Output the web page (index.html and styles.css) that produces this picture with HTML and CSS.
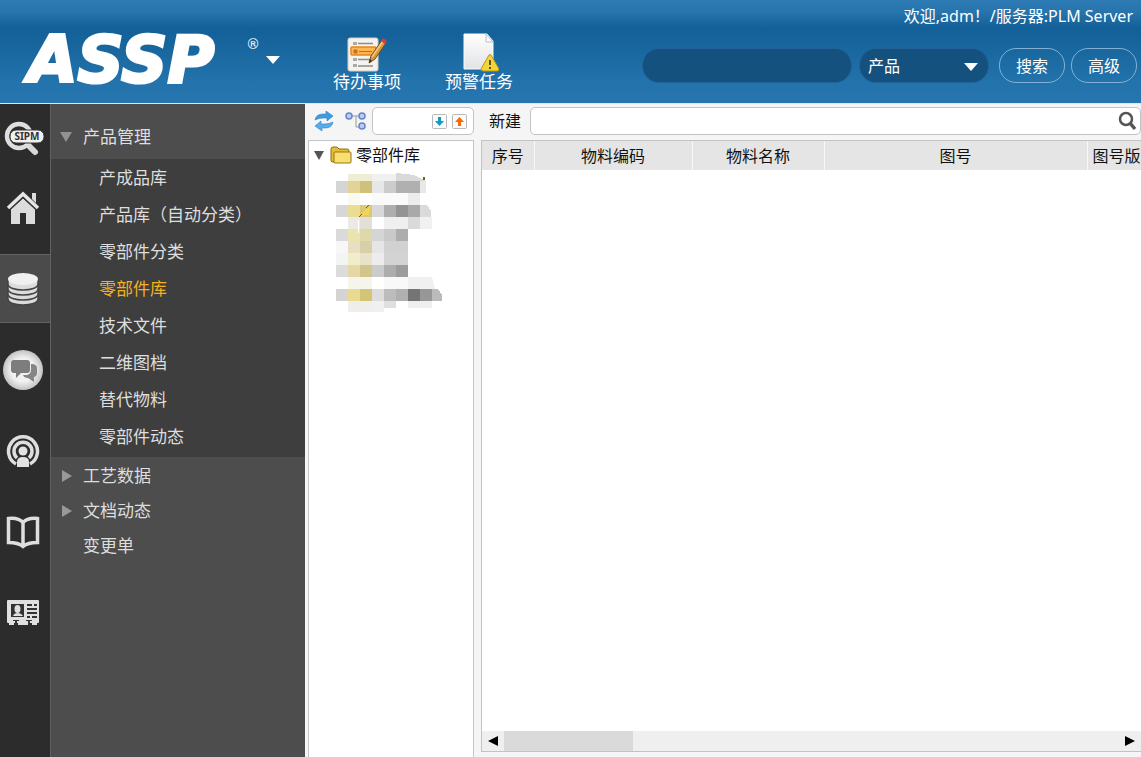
FILE: index.html
```html
<!DOCTYPE html>
<html lang="zh-CN">
<head>
    <meta charset="UTF-8">
    <title>ASSP</title>
    <link rel="stylesheet" href="styles.css">
</head>
<body>
    <!-- 顶部 -->
    <header class="m-header">
        <div class="logo">ASSP<sup>®</sup></div>
        <button class="logo-more" type="button" aria-label="ASSP"><i class="tri-down"></i></button>

        <nav class="shortcuts">
            <a href="#">
                <svg width="40" height="36" viewBox="0 0 40 36">
                    <rect x="1" y="2" width="30" height="33" rx="2" fill="#f5f3ee" stroke="#d3cfc6"/>
                    <rect x="6" y="6" width="4" height="3" fill="#aaa"/><path d="M11 7.500h15M11 23.500h14M11 30h15" stroke="#8d8d8d" stroke-width="1.500"/>
                    <rect x="6" y="22" width="4" height="3" fill="#aaa"/><rect x="6" y="28" width="4" height="3" fill="#aaa"/>
                    <rect x="4" y="11" width="25" height="8" rx="1" fill="#ffb551" stroke="#e8851c" stroke-width="1.500"/>
                    <path d="M7 14h3v3H7zM12 15.500h13" fill="#c77418" stroke="#b5752c"/>
                    <path d="M22 27l2-7L35 4l4 3-11 16z" fill="#d99a3e" stroke="#75471d"/>
                    <path d="M25 21L36 5" stroke="#f7cc7d" stroke-width="1.500"/>
                    <path d="M34 5l2-3 4 3-2 3z" fill="#df3b32"/><path d="M22 27l1-4 2 2z" fill="#333"/>
                </svg>
                <span>待办事项</span>
            </a>
            <a href="#">
                <svg width="40" height="40" viewBox="0 0 40 40">
                    <defs><linearGradient id="paper" x2="0" y2="1"><stop stop-color="#fff"/><stop offset="1" stop-color="#e2e3e6"/></linearGradient></defs>
                    <path d="M5 2h23l6 7v28H5z" fill="url(#paper)" stroke="#fafafa"/>
                    <path d="M27 2v8h7z" fill="#fff" stroke="#b6c0cb"/>
                    <path d="M30 23q1-1 2 0l8 14q0 2-2 2H24q-2 0-2-2z" fill="#f3d43b" stroke="#bd9614"/>
                    <path d="M30 28h2v5h-2zM30 35h2v2h-2z" fill="#665214"/>
                </svg>
                <span>预警任务</span>
            </a>
        </nav>

        <div class="header-right">
            <p class="welcome">欢迎,adm！/服务器:PLM Server</p>
            <form class="search">
                <input class="search-text" type="text" aria-label="搜索">
                <div class="search-type">
                    <select aria-label="产品"><option>产品</option></select>
                    <i class="tri-down"></i>
                </div>
                <button class="btn" type="button">搜索</button>
                <button class="btn" type="button">高级</button>
            </form>
        </div>
    </header>

    <div class="m-body">
        <!-- 图标栏 -->
        <aside class="m-rail">
            <a class="rail-item" href="#" aria-label="SIPM">
                <svg width="42" height="38" viewBox="0 0 42 38">
                    <path d="M26 25l7 7" stroke="#d8d8d8" stroke-width="6" stroke-linecap="round"/>
                    <circle cx="17" cy="16" r="12" fill="none" stroke="#dedede" stroke-width="4.500"/>
                    <rect x="8" y="10" width="34" height="13" rx="6" fill="#f0f0f0" stroke="#333"/>
                    <text class="sipm" x="25" y="20" text-anchor="middle">SIPM</text>
                </svg>
            </a>
            <nav class="rail-nav">
                <a class="rail-item" href="#" aria-label="首页">
                    <svg width="34" height="36" viewBox="0 0 34 36">
                        <path d="M26 3h4v10l-4-4z" fill="#ddd"/>
                        <path d="M2 18L17 4l15 14" fill="none" stroke="#e6e6e6" stroke-width="3.500"/>
                        <path d="M5 19L17 8l12 11v15h-9V23h-6v11H5z" fill="#dcdcdc"/>
                        <path d="M4 20L17 8l13 12" fill="none" stroke="#333"/>
                    </svg>
                </a>
                <a class="rail-item z-active" href="#" aria-label="产品管理">
                    <svg width="32" height="34" viewBox="0 0 32 34">
                        <g fill="#dcdcdc" stroke="#444" stroke-width="1.500">
                            <path d="M1 22v5c0 8 30 8 30 0v-5z"/>
                            <path d="M1 17v5c0 8 30 8 30 0v-5z"/>
                            <path d="M1 12v5c0 8 30 8 30 0v-5z"/>
                            <path d="M1 7v5c0 8 30 8 30 0V7z"/>
                            <ellipse cx="16" cy="7" rx="15" ry="6" fill="#f0f0f0" stroke="none"/>
                        </g>
                    </svg>
                </a>
                <a class="rail-item" href="#" aria-label="消息">
                    <svg width="42" height="42" viewBox="0 0 42 42">
                        <defs><radialGradient id="ball"><stop offset=".6" stop-color="#f0f0f0"/><stop offset="1" stop-color="#c2c2c2"/></radialGradient></defs>
                        <circle cx="21" cy="21" r="20" fill="url(#ball)"/>
                        <path d="M29 15h2q4 1 4 4v5q0 3-3 4v5l-6-4q-4 0-5-3h4q4-1 4-5z" fill="#858585"/>
                        <path d="M12 11h13q3 0 3 3v7q0 3-3 3h-6l-5 5v-5h-2q-3 0-3-3v-7q0-3 3-3z" fill="#7d7d7d"/>
                    </svg>
                </a>
                <a class="rail-item" href="#" aria-label="动态">
                    <svg width="34" height="34" viewBox="0 0 34 34">
                        <g fill="none" stroke="#dedede" stroke-width="3.500">
                            <path d="M10 30a14.500 14.500 0 1 1 14 0"/>
                            <path d="M11 24a9 9 0 1 1 12 0"/>
                        </g>
                        <circle cx="17" cy="17" r="4.500" fill="#e2e2e2"/>
                        <path d="M11 33v-5q0-5 6-5t6 5v5z" fill="#e2e2e2"/>
                    </svg>
                </a>
                <a class="rail-item" href="#" aria-label="文档">
                    <svg width="34" height="34" viewBox="0 0 34 34">
                        <path d="M2.500 3.500q10-1 14.500 4 4.500-5 14.500-4v24q-10 0-14.500 4-4.500-4-14.500-4zM17 8v22" fill="none" stroke="#dedede" stroke-width="3.500"/>
                    </svg>
                </a>
                <a class="rail-item" href="#" aria-label="名片">
                    <svg width="32" height="26" viewBox="0 0 32 26">
                        <rect width="32" height="23" rx="1" fill="#e0e0e0"/>
                        <path d="M4 4h13v13H4zM20 4h5v2h-5zM27 4h3v2h-3zM20 8h10v2H20zM20 12h10v2H20zM20 16h3v2h-3zM25 16h5v2h-5z" fill="#333"/>
                        <ellipse cx="10.500" cy="9" rx="3" ry="4" fill="#e0e0e0"/><path d="M6 16q1-3 4.500-3t5.500 3z" fill="#e0e0e0"/>
                        <path d="M2 23h5v2H2zM11 23h10v2H11zM25 23h5v2h-5z" fill="#e0e0e0"/>
                        <path d="M6 20h6v1H6zM8 20h2v5H8zM19 20h6v1h-6zM21 20h2v5h-2z" fill="#333"/>
                    </svg>
                </a>
            </nav>
        </aside>

        <!-- 菜单 -->
        <nav class="m-menu">
            <a class="menu-title first" href="#"><i class="tri-down"></i>产品管理</a>
            <ul class="submenu">
                <li><a href="#">产成品库</a></li>
                <li><a href="#">产品库（自动分类）</a></li>
                <li><a href="#">零部件分类</a></li>
                <li><a class="z-active" href="#">零部件库</a></li>
                <li><a href="#">技术文件</a></li>
                <li><a href="#">二维图档</a></li>
                <li><a href="#">替代物料</a></li>
                <li><a href="#">零部件动态</a></li>
            </ul>
            <a class="menu-title" href="#"><i class="tri-right"></i>工艺数据</a>
            <a class="menu-title" href="#"><i class="tri-right"></i>文档动态</a>
            <a class="menu-title" href="#">变更单</a>
        </nav>

        <!-- 分类树 -->
        <section class="m-tree">
            <div class="toolbar">
                <button class="icon-btn" type="button" aria-label="刷新">
                    <svg width="20" height="20" viewBox="0 0 20 20">
                        <path d="M1 9q1-6 8-6h3V0l7 5-6 5V7H9Q5 7 1 9z" fill="#3f9be0" stroke="#2b7fc6" stroke-width=".6"/>
                        <path d="M19 11q-1 6-8 6H8v3l-7-5 6-5v3h4q4 0 8-2z" fill="#54aeea" stroke="#2b7fc6" stroke-width=".6"/>
                    </svg>
                </button>
                <button class="icon-btn" type="button" aria-label="展开">
                    <svg width="22" height="20" viewBox="0 0 22 20">
                        <path d="M7 5h9M11 5v11h5" fill="none" stroke="#999"/>
                        <g fill="#bccdf5" stroke="#6884cb" stroke-width="1.500"><circle cx="4" cy="5" r="3"/><circle cx="17" cy="5" r="3"/><circle cx="17" cy="15" r="3"/></g>
                    </svg>
                </button>
                <div class="find-box">
                    <input type="text" aria-label="查找">
                    <button class="icon-btn" type="button" aria-label="向下">
                        <svg width="15" height="15" viewBox="0 0 15 15"><rect x=".5" y=".5" width="14" height="14" rx="1" fill="#fafafa" stroke="#b9b9b9"/><path d="M6 3h3v4h3l-4.500 5L3 7h3z" fill="#129bbd"/></svg>
                    </button>
                    <button class="icon-btn" type="button" aria-label="向上">
                        <svg width="15" height="15" viewBox="0 0 15 15"><rect x=".5" y=".5" width="14" height="14" rx="1" fill="#fafafa" stroke="#b9b9b9"/><path d="M6 12h3V8h3L7.500 3 3 8h3z" fill="#f36b08"/></svg>
                    </button>
                </div>
            </div>
            <div class="tree">
                <a class="tree-root" href="#">
                    <i class="tri-down"></i>
                    <svg width="22" height="18" viewBox="0 0 22 18">
                        <path d="M1 15V3q0-2 2-2h4l2 2h8q2 0 2 2v11H2z" fill="#e6bd36" stroke="#8f6c14"/>
                        <path d="M5 6h15q1 0 1 1v9q0 1-1 1H5q-1 0-1-1V7q0-1 1-1z" fill="#f8df72" stroke="#9b7719"/>
                    </svg>
                    <span>零部件库</span>
                </a>
                <!-- 子节点（打码） -->
                <svg class="masked" width="120" height="144" viewBox="0 0 120 144" shape-rendering="crispEdges" aria-hidden="true">
                    <path d="M24 5h24v7H24z" fill="#f0edd5"/><path d="M48 5h24v7H48z" fill="#f0f0f0"/><path d="M72 4l18 2 12 6H72z" fill="#d9d9d9"/>
                    <path d="M12 12h12v12H12z" fill="#d5d5d5"/><path d="M24 12h12v12H24z" fill="#e4d396"/><path d="M36 12h12v12H36z" fill="#cfc179"/><path d="M48 12h12v12H48z" fill="#e7e7e7"/><path d="M60 12h12v12H60z" fill="#ccc"/><path d="M72 12h24v12H72z" fill="#b0b0b0"/><path d="M96 12h6v12h-6z" fill="#e8e8e8"/>
                    <path d="M24 24h12v12H24z" fill="#fbfaf0"/><path d="M48 24h36v12H48z" fill="#fafafa"/><path d="M84 24h12v12H84z" fill="#ececec"/>
                    <path d="M12 36h12v12H12z" fill="#d7d7d7"/><path d="M24 36h12v12H24z" fill="#eadc90"/><path d="M36 36h12v12H36z" fill="#dac876"/><path d="M48 36h12v12H48z" fill="#d8d8d8"/><path d="M60 36h12v12H60z" fill="#aeaeae"/><path d="M72 36h12v12H72z" fill="#949494"/><path d="M84 36h12v12H84z" fill="#a9a9a9"/><path d="M96 36h7l4 6v6H96z" fill="#dadada"/>
                    <path d="M24 48h12v12H24z" fill="#eceae6"/><path d="M36 48h12v12H36z" fill="#e2dfd5"/><path d="M60 48h24v12H60z" fill="#efefef"/><path d="M84 48h12v12H84z" fill="#dadada"/><path d="M96 48h12v12H96z" fill="#f1f1f1"/>
                    <path d="M12 60h12v12H12z" fill="#dadada"/><path d="M24 60h12v12H24z" fill="#eae4ae"/><path d="M36 60h12v12H36z" fill="#dfd9a9"/><path d="M48 60h12v12H48z" fill="#d5d5d5"/><path d="M60 60h12v12H60z" fill="#c9c9c9"/><path d="M72 60h12v12H72z" fill="#adadad"/>
                    <path d="M12 72h12v12H12z" fill="#f7f7f7"/><path d="M24 72h12v12H24z" fill="#e8dfc3"/><path d="M36 72h12v12H36z" fill="#d7cfa9"/><path d="M48 72h12v12H48z" fill="#e5e5e5"/><path d="M60 72h24v12H60z" fill="#d1d1d1"/>
                    <path d="M12 84h12v12H12z" fill="#f3f5f4"/><path d="M24 84h12v12H24z" fill="#f0edc9"/><path d="M36 84h12v12H36z" fill="#e8e3c8"/><path d="M48 84h12v12H48z" fill="#ececec"/><path d="M60 84h24v12H60z" fill="#d3d3d3"/>
                    <path d="M12 96h12v12H12z" fill="#dcdcdc"/><path d="M24 96h12v12H24z" fill="#e5d8a6"/><path d="M36 96h12v12H36z" fill="#d0c68c"/><path d="M48 96h12v12H48z" fill="#cbcbcb"/><path d="M60 96h12v12H60z" fill="#adadad"/><path d="M72 96h12v12H72z" fill="#9c9c9c"/>
                    <path d="M24 108h24v12H24z" fill="#f6f5eb"/><path d="M60 108h24v12H60z" fill="#f8f8f8"/><path d="M84 108h24l3 12H84z" fill="#f0f0f0"/>
                    <path d="M12 120h12v12H12z" fill="#d4d4d4"/><path d="M24 120h12v12H24z" fill="#e8da90"/><path d="M36 120h12v12H36z" fill="#d3c478"/><path d="M48 120h12v12H48z" fill="#ddd"/><path d="M60 120h12v12H60z" fill="#bcbcbc"/><path d="M72 120h12v12H72z" fill="#b0b0b0"/><path d="M84 120h12v12H84z" fill="#747474"/><path d="M96 120h12v12H96z" fill="#979797"/><path d="M108 120h6l4 6v6h-10z" fill="#bbb"/>
                    <path d="M24 132h24v11H24z" fill="#efeeea"/><path d="M48 132h12v11H48z" fill="#f0f0f0"/><path d="M60 132h12v7H60z" fill="#dfdfdf"/><path d="M84 132h24v7H84z" fill="#eee"/>
                    <path d="M35 47l8-7 3-3-1 9z" fill="#f4d552"/><path d="M35 48l3-3M42 39l3-3M99 8h1v2h-1z" stroke="#75601b"/><path d="M34 51h1v13h-1z" fill="#fff"/>
                </svg>
            </div>
        </section>

        <!-- 列表 -->
        <main class="m-main">
            <div class="toolbar">
                <button class="new-btn" type="button">新建</button>
                <div class="filter-box">
                    <input type="text" aria-label="过滤">
                    <button class="icon-btn" type="button" aria-label="查询">
                        <svg width="20" height="20" viewBox="0 0 20 20"><circle cx="9" cy="8" r="6" fill="none" stroke="#555" stroke-width="2.500"/><path d="M13 12l5 6" stroke="#555" stroke-width="3.500"/></svg>
                    </button>
                </div>
            </div>
            <div class="grid">
                <div class="grid-view">
                    <table>
                        <colgroup><col class="col-no"><col class="col-code"><col class="col-name"><col class="col-drawing"><col></colgroup>
                        <thead>
                            <tr><th>序号</th><th>物料编码</th><th>物料名称</th><th>图号</th><th class="left">图号版</th></tr>
                        </thead>
                    </table>
                </div>
                <div class="scrollbar">
                    <button type="button" aria-label="向左"><svg width="10" height="10" viewBox="0 0 10 10"><path d="M0 5l10-5v10z"/></svg></button>
                    <div class="track"><div class="thumb"></div></div>
                    <button type="button" aria-label="向右"><svg width="10" height="10" viewBox="0 0 10 10"><path d="M10 5L0 0v10z"/></svg></button>
                </div>
            </div>
        </main>
    </div>
</body>
</html>
```

FILE: styles.css
```css
* {
    box-sizing: border-box;
}
html, body {
    height: 100%;
    margin: 0;
}
body {
    display: flex;
    flex-direction: column;
    overflow: hidden;
    background: #f5f5f5;
    color: #111;
    font: 16px/20px "Noto Sans", "Noto Sans CJK SC", sans-serif;
}
a {
    color: inherit;
    text-decoration: none;
}
button, input, select {
    margin: 0;
    padding: 0;
    border: 0;
    background: none;
    color: inherit;
    font: inherit;
}
svg {
    display: block;
    flex: none;
}
ul {
    margin: 0;
    padding: 0;
    list-style: none;
}

/* 三角 */
.tri-down, .tri-right {
    display: block;
    flex: none;
    width: 0;
    height: 0;
    border: 6px solid transparent;
}
.tri-down {
    border-width: 8px 7px 0;
    border-top-color: #fff;
}
.tri-right {
    border-width: 6px 0 6px 10px;
    border-left-color: #999;
}

/* header */
.m-header {
    display: flex;
    flex: none;
    height: 104px;
    border-bottom: 1px solid #dfe7ee;
    background: linear-gradient(#2d7bb5 0, #2874ad 12px, #126097 28px, #19679f 50px, #2272ab 80px, #2876af 100%);
    color: #fff;
}
.logo {
    display: flex;
    flex: none;
    align-items: flex-start;
    justify-content: space-between;
    width: 260px;
    padding: 30px 0 0 28px;
    font: italic bold 64px/60px "DejaVu Sans", sans-serif;
    -webkit-text-stroke: 3px #fff;
}
.logo sup {
    padding-top: 6px;
    font: 14px/16px "DejaVu Sans", sans-serif;
    -webkit-text-stroke: 0;
}
.logo-more {
    align-self: flex-start;
    padding: 56px 6px 8px;
}
.shortcuts {
    display: flex;
    gap: 42px;
    margin-left: 46px;
}
.shortcuts a {
    display: flex;
    flex-direction: column;
    align-items: center;
    justify-content: flex-end;
    padding-bottom: 11px;
    width: 70px;
    font-size: 17px;
    white-space: nowrap;
}
.header-right {
    display: flex;
    flex-direction: column;
    gap: 22px;
    margin-left: auto;
    padding: 6px 4px 0 0;
}
.welcome {
    margin: 0;
    padding-right: 4px;
    text-align: right;
}
.search {
    display: flex;
    gap: 6px;
}
.search-text, .search-type, .btn {
    height: 35px;
    border: 1px solid #216398;
    border-radius: 17px;
}
.search-text {
    width: 210px;
    padding: 0 14px;
    background: #14517f;
}
.search-type {
    position: relative;
    width: 130px;
    margin: 0 4px 0 1px;
    background: #14517f;
}
.search-type select {
    width: 100%;
    height: 100%;
    padding-left: 8px;
    appearance: none;
}
.search-type .tri-down {
    position: absolute;
    top: 14px;
    right: 10px;
    pointer-events: none;
}
.btn {
    width: 66px;
    border-color: #82b1d4;
}

.m-body {
    display: flex;
    flex: 1;
    min-height: 0;
}

/* 图标栏 */
.m-rail {
    flex: none;
    width: 51px;
    border-right: 1px solid #626262;
    background: #2c2c2c;
}
.rail-nav {
    display: flex;
    flex-direction: column;
    gap: 12px;
}
.rail-item {
    display: flex;
    align-items: center;
    justify-content: center;
    height: 69px;
    padding-right: 4px;
}
.rail-item.z-active {
    border: solid #626262;
    border-width: 1px 0;
    background: #4b4b4b;
}
.sipm {
    fill: #333;
    font: bold 10px "Noto Sans", sans-serif;
}

/* 菜单 */
.m-menu {
    flex: none;
    width: 254px;
    padding-top: 11px;
    background: #4d4d4d;
    color: #dedede;
    font-size: 17px;
}
.menu-title {
    display: flex;
    align-items: center;
    height: 35px;
    padding-left: 32px;
}
.menu-title i {
    width: 12px;
    margin: 0 11px 0 -23px;
}
.menu-title .tri-down {
    border-width: 10px 6px 0;
    border-top-color: #929292;
}
.menu-title .tri-right {
    width: 10px;
    margin: 0 11px 0 -21px;
}
.menu-title.first {
    height: 44px;
}
.submenu {
    margin-bottom: 1px;
    padding: 0 0 2px 48px;
    background: #3e3e3e;
}
.submenu a {
    display: block;
    line-height: 37px;
}
.submenu .z-active {
    color: #f5b021;
}

/* 工具条 */
.toolbar {
    display: flex;
    align-items: center;
    height: 36px;
    padding-bottom: 2px;
}
.icon-btn {
    flex: none;
}
.find-box, .filter-box {
    display: flex;
    flex: 1;
    align-items: center;
    min-width: 0;
    height: 28px;
    border: 1px solid #c3c3c3;
    border-radius: 5px;
    background: #fff;
}
.find-box input, .filter-box input {
    flex: 1;
    width: 0;
    min-width: 0;
    height: 100%;
    padding: 0 6px;
}

/* 分类树 */
.m-tree {
    display: flex;
    flex: none;
    flex-direction: column;
    width: 169px;
    padding-left: 3px;
}
.m-tree .toolbar {
    gap: 11px;
    padding-left: 6px;
}
.find-box {
    gap: 5px;
    margin-left: -6px;
    padding-right: 6px;
}
.tree {
    flex: 1;
    border: 1px solid #c6c6c6;
    border-bottom: 0;
    background: #fff;
}
.tree-root {
    display: flex;
    align-items: center;
    height: 28px;
    padding-left: 5px;
}
.tree-root .tri-down {
    border-width: 9px 5px 0;
    border-top-color: #555;
}
.tree-root svg {
    margin: 0 4px 0 6px;
}
.masked {
    margin-left: 15px;
}

/* 列表 */
.m-main {
    display: flex;
    flex: 1;
    flex-direction: column;
    min-width: 0;
    margin-left: 7px;
    padding-bottom: 5px;
}
.new-btn {
    margin: 0 9px 0 8px;
}
.filter-box {
    padding-right: 3px;
}
.grid {
    display: flex;
    flex: 1;
    flex-direction: column;
    border: 1px solid #c3c3c3;
    border-right: 0;
    background: #fff;
}
.grid-view {
    flex: 1;
    overflow: hidden;
}
.grid table {
    width: 100%;
    border-collapse: collapse;
    table-layout: fixed;
}
.col-no { width: 52px; }
.col-code { width: 158px; }
.col-name { width: 132px; }
.col-drawing { width: 263px; }
.grid th {
    height: 29px;
    padding: 0;
    border-right: 1px solid #f8f8f8;
    background: #e5e5e5;
    font-weight: normal;
    white-space: nowrap;
}
.grid th:last-child {
    border-right: 0;
}
.grid th.left {
    padding-left: 5px;
    text-align: left;
}
.scrollbar {
    display: flex;
    height: 20px;
    background: #efefef;
}
.scrollbar button {
    display: flex;
    align-items: center;
    justify-content: center;
    width: 22px;
}
.track {
    flex: 1;
}
.thumb {
    width: 21%;
    height: 100%;
    background: #dadada;
}
```
